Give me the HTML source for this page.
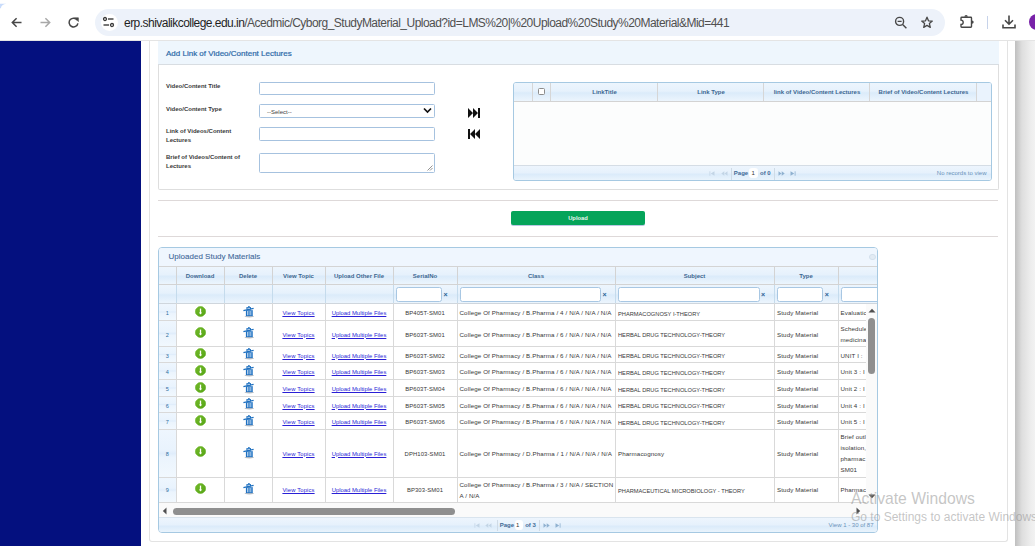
<!DOCTYPE html><html><head><meta charset="utf-8"><title>Study Material Upload</title><style>
*{box-sizing:border-box;margin:0;padding:0}
html,body{width:1035px;height:546px;overflow:hidden;background:#fff;font-family:"Liberation Sans",sans-serif;position:relative}
.a{position:absolute}
.t{position:absolute;white-space:nowrap}
</style></head><body>
<div class="a" style="left:0;top:0;width:1035px;height:41px;background:#fff"></div>
<svg class="a" style="left:11px;top:17px" width="11" height="11" viewBox="0 0 11 11"><path d="M10.5 5.5H1.5 M5.6 1.2L1.3 5.5L5.6 9.8" stroke="#474747" stroke-width="1.5" fill="none"/></svg>
<svg class="a" style="left:39.5px;top:17px" width="11" height="11" viewBox="0 0 11 11"><path d="M0.5 5.5H9.5 M5.4 1.2L9.7 5.5L5.4 9.8" stroke="#a8a8a8" stroke-width="1.5" fill="none"/></svg>
<svg class="a" style="left:68px;top:17px" width="11" height="11" viewBox="0 0 11 11"><path d="M9.3 3.2A4.4 4.4 0 1 0 9.9 6.3" stroke="#474747" stroke-width="1.5" fill="none"/><path d="M6.6 0.8H10.4V4.6Z" fill="#474747" stroke="#474747" stroke-width="0.6" stroke-linejoin="round"/></svg>
<div class="a" style="left:95px;top:9px;width:850px;height:27px;border-radius:14px;background:#edf2fa"></div>
<div class="a" style="left:100.5px;top:13.5px;width:17.5px;height:17.5px;border-radius:50%;background:#fff"></div>
<svg class="a" style="left:102px;top:16px" width="13" height="12" viewBox="0 0 13 12"><circle cx="3" cy="3" r="1.5" stroke="#3c3c3c" stroke-width="1.3" fill="none"/><path d="M6 3H11.5" stroke="#3c3c3c" stroke-width="1.4"/><circle cx="10" cy="9" r="1.5" stroke="#3c3c3c" stroke-width="1.3" fill="none"/><path d="M1.5 9H7" stroke="#3c3c3c" stroke-width="1.4"/></svg>
<div class="t" style="left:124px;top:14.5px;font-size:12px;line-height:16px;letter-spacing:-0.53px;color:#1f1f1f">erp.shivalikcollege.edu.in<span style="color:#505050">/Acedmic/Cyborg_StudyMaterial_Upload?id=LMS%20|%20Upload%20Study%20Material&amp;Mid=441</span></div>
<svg class="a" style="left:894px;top:16px" width="14" height="13" viewBox="0 0 14 13"><circle cx="5.6" cy="5.4" r="4" stroke="#474747" stroke-width="1.4" fill="none"/><path d="M3.6 5.4H7.6 M8.6 8.4L12.4 12.2" stroke="#474747" stroke-width="1.4"/></svg>
<svg class="a" style="left:919.5px;top:16px" width="14" height="13" viewBox="0 0 14 13"><path d="M7 1.2L8.5 4.8L12.3 5.1L9.4 7.6L10.3 11.4L7 9.4L3.7 11.4L4.6 7.6L1.7 5.1L5.5 4.8Z" stroke="#474747" stroke-width="1.3" fill="none" stroke-linejoin="round"/></svg>
<svg class="a" style="left:958px;top:13px" width="16" height="16" viewBox="0 0 16 16"><path d="M3.7 4.2H12.8Q13.5 4.2 13.5 4.9V13.6Q13.5 14.3 12.8 14.3H3.7Q3 14.3 3 13.6V11.5A2.2 2.2 0 0 0 3 7.1V4.9Q3 4.2 3.7 4.2Z" stroke="#474747" stroke-width="1.4" fill="none"/><path d="M6.4 3.8A1.7 1.7 0 0 1 9.8 3.8Z M14 7.4A1.7 1.7 0 0 1 14 10.8Z" fill="#474747"/></svg>
<div class="a" style="left:987px;top:16px;width:1px;height:13px;background:#c7d3ea"></div>
<svg class="a" style="left:1001px;top:14px" width="16" height="16" viewBox="0 0 16 16"><path d="M8 1.5V10 M4 6.2L8 10.2L12 6.2 M2 10.5V13.8H14V10.5" stroke="#474747" stroke-width="1.6" fill="none"/></svg>
<div class="a" style="left:1029.4px;top:13.8px;width:16.6px;height:16.6px;border-radius:50%;background:#7821a8"></div>
<svg class="a" style="left:0;top:0" width="8" height="9" viewBox="0 0 8 9"><path d="M0 3.7H6.5Q1.2 4.3 0.9 8.2H0Z" fill="#c9dcfb"/></svg>
<div class="a" style="left:0;top:40px;width:1035px;height:1px;background:#e4e4e4"></div>
<div class="a" style="left:0;top:41px;width:141px;height:505px;background:#04107f"></div>
<div class="a" style="left:1015px;top:41px;width:20px;height:505px;background:linear-gradient(to right,#bfbfbf,#dedede 35%,#eeeeee 80%,#f2f2f2)"></div>
<div class="a" style="left:149px;top:41px;width:859px;height:501px;border:1px solid #e3e3e3;border-top:none;border-radius:0 0 3px 3px"></div>
<div class="a" style="left:158px;top:41px;width:841px;height:149px;border:1px solid #dedede;border-top:none;border-radius:0 0 2px 2px"></div>
<div class="a" style="left:158px;top:41px;width:841px;height:24px;background:#eef6fd;border-bottom:1px solid #d8dde2"></div>
<div class="t" style="left:166px;top:48.7px;font-size:8px;line-height:10px;color:#2c69a8;-webkit-text-stroke:0.2px #2c69a8">Add Link of Video/Content Lectures</div>
<div class="t" style="left:166px;top:82px;font-size:6px;line-height:9px;font-weight:bold;color:#3a3a3a">Video/Content Title</div>
<div class="t" style="left:166px;top:104.6px;font-size:6px;line-height:9px;font-weight:bold;color:#3a3a3a">Video/Content Type</div>
<div class="t" style="left:166px;top:126.5px;font-size:6px;line-height:9px;font-weight:bold;color:#3a3a3a">Link of Videos/Content<br>Lectures</div>
<div class="t" style="left:166px;top:153px;font-size:6px;line-height:9px;font-weight:bold;color:#3a3a3a">Brief of Videos/Content of<br>Lectures</div>
<div class="a" style="left:258.5px;top:82px;width:176.5px;height:13px;border:1px solid #a6c2df;border-radius:1.5px;background:#fff"></div>
<div class="a" style="left:258.5px;top:104px;width:176.5px;height:13.5px;border:1px solid #a6c2df;border-radius:1.5px;background:#fff"></div>
<div class="t" style="left:267px;top:107.5px;font-size:6px;line-height:8px;color:#444">--Select--</div>
<svg class="a" style="left:423px;top:107px" width="9" height="7" viewBox="0 0 9 7"><path d="M1 1.5L4.5 5L8 1.5" stroke="#111" stroke-width="1.7" fill="none"/></svg>
<div class="a" style="left:258.5px;top:126.5px;width:176.5px;height:14px;border:1px solid #a6c2df;border-radius:1.5px;background:#fff"></div>
<div class="a" style="left:258.5px;top:152.5px;width:176.5px;height:20px;border:1px solid #a6c2df;border-radius:1.5px;background:#fff"></div>
<svg class="a" style="left:427px;top:165px" width="6" height="6" viewBox="0 0 6 6"><path d="M5.5 0.5L0.5 5.5 M5.5 3L3 5.5" stroke="#777" stroke-width="0.8"/></svg>
<svg class="a" style="left:468px;top:108px" width="12" height="10" viewBox="0 0 12 10"><path d="M0 0L5 5L0 10Z M5 0L10 5L5 10Z" fill="#111"/><rect x="10" y="0" width="2" height="10" fill="#111"/></svg>
<svg class="a" style="left:468px;top:129px" width="12" height="10" viewBox="0 0 12 10"><rect x="0" y="0" width="2" height="10" fill="#111"/><path d="M12 0L7 5L12 10Z M7 0L2 5L7 10Z" fill="#111"/></svg>
<div class="a" style="left:513px;top:82px;width:479px;height:99px;border:1px solid #a6c9e2;border-radius:3px;background:#fcfdfd;overflow:hidden">
<div class="a" style="left:0;top:0;width:477px;height:19px;background:linear-gradient(#edf5fd,#e6f1fc 45%,#dbebfa 55%,#ecf5fd);border-bottom:1px solid #d3d3d3"></div>
<div class="a" style="left:462px;top:0;width:20px;height:18px;background:#eaf3fd"></div>
<div class="a" style="left:18px;top:0;width:1px;height:18px;background:#d6d6d6"></div>
<div class="a" style="left:36px;top:0;width:1px;height:18px;background:#d6d6d6"></div>
<div class="a" style="left:143px;top:0;width:1px;height:18px;background:#d6d6d6"></div>
<div class="a" style="left:249px;top:0;width:1px;height:18px;background:#d6d6d6"></div>
<div class="a" style="left:355px;top:0;width:1px;height:18px;background:#d6d6d6"></div>
<div class="a" style="left:462px;top:0;width:1px;height:18px;background:#d6d6d6"></div>
<div class="a" style="left:24px;top:5.3px;width:6.5px;height:6.5px;border:1px solid #8c8c8c;border-radius:1.5px;background:#fff"></div>
<div class="t" style="left:37px;top:5px;width:107px;font-size:6px;line-height:8px;font-weight:bold;color:#3d6791;text-align:center">LinkTitle</div>
<div class="t" style="left:144px;top:5px;width:106px;font-size:6px;line-height:8px;font-weight:bold;color:#3d6791;text-align:center">Link Type</div>
<div class="t" style="left:250px;top:5px;width:106px;font-size:6px;line-height:8px;font-weight:bold;color:#3d6791;text-align:center">link of Video/Content Lectures</div>
<div class="t" style="left:356px;top:5px;width:107px;font-size:6px;line-height:8px;font-weight:bold;color:#3d6791;text-align:center">Brief of Video/Content Lectures</div>
<div class="a" style="left:0;top:82px;width:477px;height:16px;background:linear-gradient(#edf5fd,#e6f1fc 45%,#dbebfa 55%,#ecf5fd);border-top:1px solid #d5dde5"></div>
<svg class="a" style="left:195px;top:87.5px" width="6" height="5" viewBox="0 0 6 5"><rect x="0.5" y="0.3" width="0.8" height="4.4" fill="#c3d5e6"/><path d="M5.5 0.3L1.8 2.5L5.5 4.7Z" fill="#c3d5e6"/></svg>
<svg class="a" style="left:206.5px;top:87.5px" width="7" height="5" viewBox="0 0 7 5"><path d="M3.3 0.3L0.3 2.5L3.3 4.7Z M6.5 0.3L3.5 2.5L6.5 4.7Z" fill="#c3d5e6"/></svg>
<svg class="a" style="left:263.5px;top:87.5px" width="7" height="5" viewBox="0 0 7 5"><path d="M0.5 0.3L3.5 2.5L0.5 4.7Z M3.7 0.3L6.7 2.5L3.7 4.7Z" fill="#8fb1d0"/></svg>
<svg class="a" style="left:276px;top:87.5px" width="6" height="5" viewBox="0 0 6 5"><path d="M0.5 0.3L4.2 2.5L0.5 4.7Z" fill="#8fb1d0"/><rect x="4.7" y="0.3" width="0.8" height="4.4" fill="#8fb1d0"/></svg>
<div class="a" style="left:217px;top:84.5px;width:1px;height:12px;background:#cfdbe6"></div>
<div class="t" style="left:219.79999999999995px;top:85.6px;font-size:6px;line-height:8px;color:#3f6a96;font-weight:bold">Page</div>
<div class="a" style="left:235.29999999999995px;top:85px;width:8.5px;height:9.5px;background:#fff;border-radius:3px"></div>
<div class="t" style="left:237.5px;top:85.6px;font-size:6px;line-height:8px;color:#3f6a96;color:#333">1</div>
<div class="t" style="left:246px;top:85.6px;font-size:6px;line-height:8px;color:#3f6a96;font-weight:bold">of 0</div>
<div class="a" style="left:259.5px;top:84.5px;width:1px;height:12px;background:#cfdbe6"></div>
<div class="t" style="left:422.79999999999995px;top:85.6px;font-size:6px;line-height:8px;color:#3f6a96;color:#6b93ba">No records to view</div>
</div>
<div class="a" style="left:158px;top:200px;width:840px;height:1px;background:#ded9d9"></div>
<div class="a" style="left:158px;top:236px;width:840px;height:1px;background:#ded9d9"></div>
<div class="a" style="left:511px;top:211px;width:134px;height:14px;background:#05a45a;border-radius:2px;box-shadow:0 1px 0 #b9c7e3"></div>
<div class="t" style="left:511px;top:214px;width:134px;text-align:center;font-size:5.8px;line-height:8px;font-weight:bold;color:#e8f5ee">Upload</div>
<div class="a" style="left:158px;top:247px;width:720px;height:286px;border:1px solid #a6c9e2;border-radius:4px;background:#fff;overflow:hidden">
<div class="a" style="left:0;top:0;width:718px;height:19px;background:#eff6fe;border-bottom:1px solid #d4d4d4"></div>
<div class="t" style="left:9.60px;top:4.00px;font-size:8px;line-height:10px;color:#42699a;-webkit-text-stroke:0.1px #42699a">Uploaded Study Materials</div>
<div class="a" style="left:710.30px;top:5.50px;width:6.5px;height:6.5px;border-radius:50%;border:1px solid #d3e0ec;background:#e2ebf4"></div>
<div class="a" style="left:0;top:19.00px;width:718px;height:18px;background:linear-gradient(#edf5fd,#e6f1fc 45%,#dbebfa 55%,#ecf5fd);border-bottom:1px solid #d3d3d3"></div>
<div class="a" style="left:0;top:37.00px;width:718px;height:19px;background:linear-gradient(#edf5fd,#e6f1fc 45%,#dbebfa 55%,#ecf5fd);border-bottom:1px solid #cfd6dd"></div>
<div class="a" style="left:17.00px;top:19.00px;width:1px;height:18px;background:#d3d3d3"></div>
<div class="a" style="left:17.00px;top:37.00px;width:1px;height:18px;background:#c5dbec"></div>
<div class="a" style="left:65.00px;top:19.00px;width:1px;height:18px;background:#d3d3d3"></div>
<div class="a" style="left:65.00px;top:37.00px;width:1px;height:18px;background:#c5dbec"></div>
<div class="a" style="left:113.00px;top:19.00px;width:1px;height:18px;background:#d3d3d3"></div>
<div class="a" style="left:113.00px;top:37.00px;width:1px;height:18px;background:#c5dbec"></div>
<div class="a" style="left:166.00px;top:19.00px;width:1px;height:18px;background:#d3d3d3"></div>
<div class="a" style="left:166.00px;top:37.00px;width:1px;height:18px;background:#c5dbec"></div>
<div class="a" style="left:234.00px;top:19.00px;width:1px;height:18px;background:#d3d3d3"></div>
<div class="a" style="left:234.00px;top:37.00px;width:1px;height:18px;background:#c5dbec"></div>
<div class="a" style="left:298.00px;top:19.00px;width:1px;height:18px;background:#d3d3d3"></div>
<div class="a" style="left:298.00px;top:37.00px;width:1px;height:18px;background:#c5dbec"></div>
<div class="a" style="left:456.00px;top:19.00px;width:1px;height:18px;background:#d3d3d3"></div>
<div class="a" style="left:456.00px;top:37.00px;width:1px;height:18px;background:#c5dbec"></div>
<div class="a" style="left:615.00px;top:19.00px;width:1px;height:18px;background:#d3d3d3"></div>
<div class="a" style="left:615.00px;top:37.00px;width:1px;height:18px;background:#c5dbec"></div>
<div class="a" style="left:679.00px;top:19.00px;width:1px;height:18px;background:#d3d3d3"></div>
<div class="a" style="left:679.00px;top:37.00px;width:1px;height:18px;background:#c5dbec"></div>
<div class="t" style="left:17.00px;top:24.00px;width:48px;font-size:6px;line-height:8px;font-weight:bold;color:#3d6791;text-align:center">Download</div>
<div class="t" style="left:65.00px;top:24.00px;width:48px;font-size:6px;line-height:8px;font-weight:bold;color:#3d6791;text-align:center">Delete</div>
<div class="t" style="left:113.00px;top:24.00px;width:53px;font-size:6px;line-height:8px;font-weight:bold;color:#3d6791;text-align:center">View Topic</div>
<div class="t" style="left:166.00px;top:24.00px;width:68px;font-size:6px;line-height:8px;font-weight:bold;color:#3d6791;text-align:center">Upload Other File</div>
<div class="t" style="left:234.00px;top:24.00px;width:64px;font-size:6px;line-height:8px;font-weight:bold;color:#3d6791;text-align:center">SerialNo</div>
<div class="t" style="left:298.00px;top:24.00px;width:158px;font-size:6px;line-height:8px;font-weight:bold;color:#3d6791;text-align:center">Class</div>
<div class="t" style="left:456.00px;top:24.00px;width:159px;font-size:6px;line-height:8px;font-weight:bold;color:#3d6791;text-align:center">Subject</div>
<div class="t" style="left:615.00px;top:24.00px;width:64px;font-size:6px;line-height:8px;font-weight:bold;color:#3d6791;text-align:center">Type</div>
<div class="a" style="left:237.20px;top:39.30px;width:45.5px;height:14.4px;border:1px solid #a8c7e3;border-radius:2.5px;background:#fff"></div>
<div class="t" style="left:284.50px;top:42.60px;font-size:7px;line-height:8px;font-weight:bold;color:#2a5f94">&#215;</div>
<div class="a" style="left:300.70px;top:39.30px;width:140.9px;height:14.4px;border:1px solid #a8c7e3;border-radius:2.5px;background:#fff"></div>
<div class="t" style="left:443.60px;top:42.60px;font-size:7px;line-height:8px;font-weight:bold;color:#2a5f94">&#215;</div>
<div class="a" style="left:459.00px;top:39.30px;width:141.7px;height:14.4px;border:1px solid #a8c7e3;border-radius:2.5px;background:#fff"></div>
<div class="t" style="left:602.00px;top:42.60px;font-size:7px;line-height:8px;font-weight:bold;color:#2a5f94">&#215;</div>
<div class="a" style="left:618.00px;top:39.30px;width:45.7px;height:14.4px;border:1px solid #a8c7e3;border-radius:2.5px;background:#fff"></div>
<div class="t" style="left:665.70px;top:42.60px;font-size:7px;line-height:8px;font-weight:bold;color:#2a5f94">&#215;</div>
<div class="a" style="left:682.00px;top:39.30px;width:99.0px;height:14.4px;border:1px solid #a8c7e3;border-radius:2.5px;background:#fff"></div>
<div class="t" style="left:783.00px;top:42.60px;font-size:7px;line-height:8px;font-weight:bold;color:#2a5f94">&#215;</div>
<div class="a" style="left:0;top:56.00px;width:17px;height:16px;background:linear-gradient(#eef6fe,#e9f3fd 42%,#e0edfb 50%,#ebf4fd 58%,#f1f8fe)"></div>
<div class="a" style="left:0;top:73.00px;width:17px;height:25px;background:linear-gradient(#eef6fe,#e9f3fd 42%,#e0edfb 50%,#ebf4fd 58%,#f1f8fe)"></div>
<div class="a" style="left:0;top:99.00px;width:17px;height:15px;background:linear-gradient(#eef6fe,#e9f3fd 42%,#e0edfb 50%,#ebf4fd 58%,#f1f8fe)"></div>
<div class="a" style="left:0;top:115.00px;width:17px;height:16px;background:linear-gradient(#eef6fe,#e9f3fd 42%,#e0edfb 50%,#ebf4fd 58%,#f1f8fe)"></div>
<div class="a" style="left:0;top:132.00px;width:17px;height:16px;background:linear-gradient(#eef6fe,#e9f3fd 42%,#e0edfb 50%,#ebf4fd 58%,#f1f8fe)"></div>
<div class="a" style="left:0;top:149.00px;width:17px;height:15px;background:linear-gradient(#eef6fe,#e9f3fd 42%,#e0edfb 50%,#ebf4fd 58%,#f1f8fe)"></div>
<div class="a" style="left:0;top:165.00px;width:17px;height:16px;background:linear-gradient(#eef6fe,#e9f3fd 42%,#e0edfb 50%,#ebf4fd 58%,#f1f8fe)"></div>
<div class="a" style="left:0;top:182.00px;width:17px;height:47px;background:linear-gradient(#eef6fe,#e9f3fd 42%,#e0edfb 50%,#ebf4fd 58%,#f1f8fe)"></div>
<div class="a" style="left:0;top:230.00px;width:17px;height:24px;background:linear-gradient(#eef6fe,#e9f3fd 42%,#e0edfb 50%,#ebf4fd 58%,#f1f8fe)"></div>
<div class="a" style="left:0;top:72.00px;width:718px;height:1px;background:#d9d9d9"></div>
<div class="a" style="left:0;top:98.00px;width:718px;height:1px;background:#d9d9d9"></div>
<div class="a" style="left:0;top:114.00px;width:718px;height:1px;background:#d9d9d9"></div>
<div class="a" style="left:0;top:131.00px;width:718px;height:1px;background:#d9d9d9"></div>
<div class="a" style="left:0;top:148.00px;width:718px;height:1px;background:#d9d9d9"></div>
<div class="a" style="left:0;top:164.00px;width:718px;height:1px;background:#d9d9d9"></div>
<div class="a" style="left:0;top:181.00px;width:718px;height:1px;background:#d9d9d9"></div>
<div class="a" style="left:0;top:229.00px;width:718px;height:1px;background:#d9d9d9"></div>
<div class="a" style="left:0;top:254.00px;width:718px;height:1px;background:#d9d9d9"></div>
<div class="a" style="left:17.00px;top:55.00px;width:1px;height:200px;background:#d9d9d9"></div>
<div class="a" style="left:65.00px;top:55.00px;width:1px;height:200px;background:#d9d9d9"></div>
<div class="a" style="left:113.00px;top:55.00px;width:1px;height:200px;background:#d9d9d9"></div>
<div class="a" style="left:166.00px;top:55.00px;width:1px;height:200px;background:#d9d9d9"></div>
<div class="a" style="left:234.00px;top:55.00px;width:1px;height:200px;background:#d9d9d9"></div>
<div class="a" style="left:298.00px;top:55.00px;width:1px;height:200px;background:#d9d9d9"></div>
<div class="a" style="left:456.00px;top:55.00px;width:1px;height:200px;background:#d9d9d9"></div>
<div class="a" style="left:615.00px;top:55.00px;width:1px;height:200px;background:#d9d9d9"></div>
<div class="a" style="left:679.00px;top:55.00px;width:1px;height:200px;background:#d9d9d9"></div>
<div class="t" style="left:-1.00px;top:60.00px;width:18.6px;text-align:center;font-size:5.5px;line-height:11px;color:#2e6e9e">1</div>
<div class="a" style="left:36.20px;top:58.00px;width:11px;height:11px;line-height:0"><svg width="11" height="11" viewBox="0 0 11 11"><defs><linearGradient id="dg0" x1="0" y1="0" x2="1" y2="1"><stop offset="0" stop-color="#72b92a"/><stop offset="1" stop-color="#56a516"/></linearGradient></defs><path d="M3.6 0.4H7.4L10.6 3.6V7.4L7.4 10.6H3.6L0.4 7.4V3.6Z" fill="url(#dg0)"/><circle cx="5.5" cy="5.5" r="5" fill="url(#dg0)"/><path d="M5.5 2.6V7.6" stroke="#fff" stroke-width="1.3"/><path d="M3.9 6.5L5.5 8.6L7.1 6.5Z" fill="#fff"/></svg></div>
<div class="a" style="left:84.00px;top:57.90px;width:12px;height:12px;line-height:0"><svg width="12" height="12" viewBox="0 0 12 12"><ellipse cx="6.3" cy="10.6" rx="4.8" ry="0.8" fill="#8c959e" opacity="0.6"/><path d="M0.4 4.6L10.6 2.4" stroke="#1f70c0" stroke-width="1.4"/><rect x="3.4" y="1.1" width="4.6" height="2.4" fill="#1f70c0"/><rect x="4.4" y="1.9" width="2.6" height="0.8" fill="#dbe9f6"/><rect x="5" y="0.2" width="1.8" height="1.1" fill="#1f70c0"/><rect x="2.9" y="4.2" width="6.9" height="5.9" fill="#1f70c0"/><rect x="4.3" y="5" width="1" height="4.3" fill="#e6f0fa"/><rect x="6.6" y="5" width="1" height="4.3" fill="#cfe1f3"/><rect x="8.5" y="4.4" width="0.8" height="5" fill="#7fb0e0"/></svg></div>
<div class="t" style="left:113.00px;top:60.10px;width:53.0px;text-align:center;font-size:6.2px;line-height:11px;color:#383838;letter-spacing:0.12px;color:#2a1fd6;font-size:5.9px"><u>View Topics</u></div>
<div class="t" style="left:166.00px;top:60.10px;width:68.0px;text-align:center;font-size:6.2px;line-height:11px;color:#383838;letter-spacing:0.12px;color:#2a1fd6;font-size:5.9px;letter-spacing:0"><u>Upload Multiple Files</u></div>
<div class="t" style="left:234.00px;top:60.30px;width:64.0px;text-align:center;font-size:6.2px;line-height:11px;color:#383838;letter-spacing:0.12px;font-size:5.9px">BP405T-SM01</div>
<div class="t" style="left:300.50px;top:59.30px;font-size:6.2px;line-height:11px;color:#383838;letter-spacing:0.12px;">College Of Pharmacy / B.Pharma / 4 / N/A / N/A / N/A</div>
<div class="t" style="left:459.00px;top:60.90px;font-size:6.2px;line-height:11px;color:#383838;letter-spacing:0.12px;font-size:5.7px;letter-spacing:0">PHARMACOGNOSY I-THEORY</div>
<div class="t" style="left:618.00px;top:59.30px;font-size:6.2px;line-height:11px;color:#383838;letter-spacing:0.12px;">Study Material</div>
<div class="t" style="left:681.50px;top:59.30px;font-size:6.2px;line-height:11px;color:#383838;letter-spacing:0.12px;">Evaluatic</div>
<div class="t" style="left:-1.00px;top:81.50px;width:18.6px;text-align:center;font-size:5.5px;line-height:11px;color:#2e6e9e">2</div>
<div class="a" style="left:36.20px;top:79.00px;width:11px;height:11px;line-height:0"><svg width="11" height="11" viewBox="0 0 11 11"><defs><linearGradient id="dg1" x1="0" y1="0" x2="1" y2="1"><stop offset="0" stop-color="#72b92a"/><stop offset="1" stop-color="#56a516"/></linearGradient></defs><path d="M3.6 0.4H7.4L10.6 3.6V7.4L7.4 10.6H3.6L0.4 7.4V3.6Z" fill="url(#dg1)"/><circle cx="5.5" cy="5.5" r="5" fill="url(#dg1)"/><path d="M5.5 2.6V7.6" stroke="#fff" stroke-width="1.3"/><path d="M3.9 6.5L5.5 8.6L7.1 6.5Z" fill="#fff"/></svg></div>
<div class="a" style="left:84.00px;top:79.40px;width:12px;height:12px;line-height:0"><svg width="12" height="12" viewBox="0 0 12 12"><ellipse cx="6.3" cy="10.6" rx="4.8" ry="0.8" fill="#8c959e" opacity="0.6"/><path d="M0.4 4.6L10.6 2.4" stroke="#1f70c0" stroke-width="1.4"/><rect x="3.4" y="1.1" width="4.6" height="2.4" fill="#1f70c0"/><rect x="4.4" y="1.9" width="2.6" height="0.8" fill="#dbe9f6"/><rect x="5" y="0.2" width="1.8" height="1.1" fill="#1f70c0"/><rect x="2.9" y="4.2" width="6.9" height="5.9" fill="#1f70c0"/><rect x="4.3" y="5" width="1" height="4.3" fill="#e6f0fa"/><rect x="6.6" y="5" width="1" height="4.3" fill="#cfe1f3"/><rect x="8.5" y="4.4" width="0.8" height="5" fill="#7fb0e0"/></svg></div>
<div class="t" style="left:113.00px;top:81.60px;width:53.0px;text-align:center;font-size:6.2px;line-height:11px;color:#383838;letter-spacing:0.12px;color:#2a1fd6;font-size:5.9px"><u>View Topics</u></div>
<div class="t" style="left:166.00px;top:81.60px;width:68.0px;text-align:center;font-size:6.2px;line-height:11px;color:#383838;letter-spacing:0.12px;color:#2a1fd6;font-size:5.9px;letter-spacing:0"><u>Upload Multiple Files</u></div>
<div class="t" style="left:234.00px;top:81.80px;width:64.0px;text-align:center;font-size:6.2px;line-height:11px;color:#383838;letter-spacing:0.12px;font-size:5.9px">BP603T-SM01</div>
<div class="t" style="left:300.50px;top:80.80px;font-size:6.2px;line-height:11px;color:#383838;letter-spacing:0.12px;">College Of Pharmacy / B.Pharma / 6 / N/A / N/A / N/A</div>
<div class="t" style="left:459.00px;top:82.40px;font-size:6.2px;line-height:11px;color:#383838;letter-spacing:0.12px;font-size:5.7px;letter-spacing:0">HERBAL DRUG TECHNOLOGY-THEORY</div>
<div class="t" style="left:618.00px;top:80.80px;font-size:6.2px;line-height:11px;color:#383838;letter-spacing:0.12px;">Study Material</div>
<div class="t" style="left:681.50px;top:75.30px;font-size:6.2px;line-height:11px;color:#383838;letter-spacing:0.12px;">Schedule<br>medicina</div>
<div class="t" style="left:-1.00px;top:102.50px;width:18.6px;text-align:center;font-size:5.5px;line-height:11px;color:#2e6e9e">3</div>
<div class="a" style="left:36.20px;top:100.00px;width:11px;height:11px;line-height:0"><svg width="11" height="11" viewBox="0 0 11 11"><defs><linearGradient id="dg2" x1="0" y1="0" x2="1" y2="1"><stop offset="0" stop-color="#72b92a"/><stop offset="1" stop-color="#56a516"/></linearGradient></defs><path d="M3.6 0.4H7.4L10.6 3.6V7.4L7.4 10.6H3.6L0.4 7.4V3.6Z" fill="url(#dg2)"/><circle cx="5.5" cy="5.5" r="5" fill="url(#dg2)"/><path d="M5.5 2.6V7.6" stroke="#fff" stroke-width="1.3"/><path d="M3.9 6.5L5.5 8.6L7.1 6.5Z" fill="#fff"/></svg></div>
<div class="a" style="left:84.00px;top:100.40px;width:12px;height:12px;line-height:0"><svg width="12" height="12" viewBox="0 0 12 12"><ellipse cx="6.3" cy="10.6" rx="4.8" ry="0.8" fill="#8c959e" opacity="0.6"/><path d="M0.4 4.6L10.6 2.4" stroke="#1f70c0" stroke-width="1.4"/><rect x="3.4" y="1.1" width="4.6" height="2.4" fill="#1f70c0"/><rect x="4.4" y="1.9" width="2.6" height="0.8" fill="#dbe9f6"/><rect x="5" y="0.2" width="1.8" height="1.1" fill="#1f70c0"/><rect x="2.9" y="4.2" width="6.9" height="5.9" fill="#1f70c0"/><rect x="4.3" y="5" width="1" height="4.3" fill="#e6f0fa"/><rect x="6.6" y="5" width="1" height="4.3" fill="#cfe1f3"/><rect x="8.5" y="4.4" width="0.8" height="5" fill="#7fb0e0"/></svg></div>
<div class="t" style="left:113.00px;top:102.60px;width:53.0px;text-align:center;font-size:6.2px;line-height:11px;color:#383838;letter-spacing:0.12px;color:#2a1fd6;font-size:5.9px"><u>View Topics</u></div>
<div class="t" style="left:166.00px;top:102.60px;width:68.0px;text-align:center;font-size:6.2px;line-height:11px;color:#383838;letter-spacing:0.12px;color:#2a1fd6;font-size:5.9px;letter-spacing:0"><u>Upload Multiple Files</u></div>
<div class="t" style="left:234.00px;top:102.80px;width:64.0px;text-align:center;font-size:6.2px;line-height:11px;color:#383838;letter-spacing:0.12px;font-size:5.9px">BP603T-SM02</div>
<div class="t" style="left:300.50px;top:101.80px;font-size:6.2px;line-height:11px;color:#383838;letter-spacing:0.12px;">College Of Pharmacy / B.Pharma / 6 / N/A / N/A / N/A</div>
<div class="t" style="left:459.00px;top:103.40px;font-size:6.2px;line-height:11px;color:#383838;letter-spacing:0.12px;font-size:5.7px;letter-spacing:0">HERBAL DRUG TECHNOLOGY-THEORY</div>
<div class="t" style="left:618.00px;top:101.80px;font-size:6.2px;line-height:11px;color:#383838;letter-spacing:0.12px;">Study Material</div>
<div class="t" style="left:681.50px;top:101.80px;font-size:6.2px;line-height:11px;color:#383838;letter-spacing:0.12px;">UNIT I :</div>
<div class="t" style="left:-1.00px;top:119.00px;width:18.6px;text-align:center;font-size:5.5px;line-height:11px;color:#2e6e9e">4</div>
<div class="a" style="left:36.20px;top:117.00px;width:11px;height:11px;line-height:0"><svg width="11" height="11" viewBox="0 0 11 11"><defs><linearGradient id="dg3" x1="0" y1="0" x2="1" y2="1"><stop offset="0" stop-color="#72b92a"/><stop offset="1" stop-color="#56a516"/></linearGradient></defs><path d="M3.6 0.4H7.4L10.6 3.6V7.4L7.4 10.6H3.6L0.4 7.4V3.6Z" fill="url(#dg3)"/><circle cx="5.5" cy="5.5" r="5" fill="url(#dg3)"/><path d="M5.5 2.6V7.6" stroke="#fff" stroke-width="1.3"/><path d="M3.9 6.5L5.5 8.6L7.1 6.5Z" fill="#fff"/></svg></div>
<div class="a" style="left:84.00px;top:116.90px;width:12px;height:12px;line-height:0"><svg width="12" height="12" viewBox="0 0 12 12"><ellipse cx="6.3" cy="10.6" rx="4.8" ry="0.8" fill="#8c959e" opacity="0.6"/><path d="M0.4 4.6L10.6 2.4" stroke="#1f70c0" stroke-width="1.4"/><rect x="3.4" y="1.1" width="4.6" height="2.4" fill="#1f70c0"/><rect x="4.4" y="1.9" width="2.6" height="0.8" fill="#dbe9f6"/><rect x="5" y="0.2" width="1.8" height="1.1" fill="#1f70c0"/><rect x="2.9" y="4.2" width="6.9" height="5.9" fill="#1f70c0"/><rect x="4.3" y="5" width="1" height="4.3" fill="#e6f0fa"/><rect x="6.6" y="5" width="1" height="4.3" fill="#cfe1f3"/><rect x="8.5" y="4.4" width="0.8" height="5" fill="#7fb0e0"/></svg></div>
<div class="t" style="left:113.00px;top:119.10px;width:53.0px;text-align:center;font-size:6.2px;line-height:11px;color:#383838;letter-spacing:0.12px;color:#2a1fd6;font-size:5.9px"><u>View Topics</u></div>
<div class="t" style="left:166.00px;top:119.10px;width:68.0px;text-align:center;font-size:6.2px;line-height:11px;color:#383838;letter-spacing:0.12px;color:#2a1fd6;font-size:5.9px;letter-spacing:0"><u>Upload Multiple Files</u></div>
<div class="t" style="left:234.00px;top:119.30px;width:64.0px;text-align:center;font-size:6.2px;line-height:11px;color:#383838;letter-spacing:0.12px;font-size:5.9px">BP603T-SM03</div>
<div class="t" style="left:300.50px;top:118.30px;font-size:6.2px;line-height:11px;color:#383838;letter-spacing:0.12px;">College Of Pharmacy / B.Pharma / 6 / N/A / N/A / N/A</div>
<div class="t" style="left:459.00px;top:119.90px;font-size:6.2px;line-height:11px;color:#383838;letter-spacing:0.12px;font-size:5.7px;letter-spacing:0">HERBAL DRUG TECHNOLOGY-THEORY</div>
<div class="t" style="left:618.00px;top:118.30px;font-size:6.2px;line-height:11px;color:#383838;letter-spacing:0.12px;">Study Material</div>
<div class="t" style="left:681.50px;top:118.30px;font-size:6.2px;line-height:11px;color:#383838;letter-spacing:0.12px;">Unit 3 : I</div>
<div class="t" style="left:-1.00px;top:136.00px;width:18.6px;text-align:center;font-size:5.5px;line-height:11px;color:#2e6e9e">5</div>
<div class="a" style="left:36.20px;top:134.00px;width:11px;height:11px;line-height:0"><svg width="11" height="11" viewBox="0 0 11 11"><defs><linearGradient id="dg4" x1="0" y1="0" x2="1" y2="1"><stop offset="0" stop-color="#72b92a"/><stop offset="1" stop-color="#56a516"/></linearGradient></defs><path d="M3.6 0.4H7.4L10.6 3.6V7.4L7.4 10.6H3.6L0.4 7.4V3.6Z" fill="url(#dg4)"/><circle cx="5.5" cy="5.5" r="5" fill="url(#dg4)"/><path d="M5.5 2.6V7.6" stroke="#fff" stroke-width="1.3"/><path d="M3.9 6.5L5.5 8.6L7.1 6.5Z" fill="#fff"/></svg></div>
<div class="a" style="left:84.00px;top:133.90px;width:12px;height:12px;line-height:0"><svg width="12" height="12" viewBox="0 0 12 12"><ellipse cx="6.3" cy="10.6" rx="4.8" ry="0.8" fill="#8c959e" opacity="0.6"/><path d="M0.4 4.6L10.6 2.4" stroke="#1f70c0" stroke-width="1.4"/><rect x="3.4" y="1.1" width="4.6" height="2.4" fill="#1f70c0"/><rect x="4.4" y="1.9" width="2.6" height="0.8" fill="#dbe9f6"/><rect x="5" y="0.2" width="1.8" height="1.1" fill="#1f70c0"/><rect x="2.9" y="4.2" width="6.9" height="5.9" fill="#1f70c0"/><rect x="4.3" y="5" width="1" height="4.3" fill="#e6f0fa"/><rect x="6.6" y="5" width="1" height="4.3" fill="#cfe1f3"/><rect x="8.5" y="4.4" width="0.8" height="5" fill="#7fb0e0"/></svg></div>
<div class="t" style="left:113.00px;top:136.10px;width:53.0px;text-align:center;font-size:6.2px;line-height:11px;color:#383838;letter-spacing:0.12px;color:#2a1fd6;font-size:5.9px"><u>View Topics</u></div>
<div class="t" style="left:166.00px;top:136.10px;width:68.0px;text-align:center;font-size:6.2px;line-height:11px;color:#383838;letter-spacing:0.12px;color:#2a1fd6;font-size:5.9px;letter-spacing:0"><u>Upload Multiple Files</u></div>
<div class="t" style="left:234.00px;top:136.30px;width:64.0px;text-align:center;font-size:6.2px;line-height:11px;color:#383838;letter-spacing:0.12px;font-size:5.9px">BP603T-SM04</div>
<div class="t" style="left:300.50px;top:135.30px;font-size:6.2px;line-height:11px;color:#383838;letter-spacing:0.12px;">College Of Pharmacy / B.Pharma / 6 / N/A / N/A / N/A</div>
<div class="t" style="left:459.00px;top:136.90px;font-size:6.2px;line-height:11px;color:#383838;letter-spacing:0.12px;font-size:5.7px;letter-spacing:0">HERBAL DRUG TECHNOLOGY-THEORY</div>
<div class="t" style="left:618.00px;top:135.30px;font-size:6.2px;line-height:11px;color:#383838;letter-spacing:0.12px;">Study Material</div>
<div class="t" style="left:681.50px;top:135.30px;font-size:6.2px;line-height:11px;color:#383838;letter-spacing:0.12px;">Unit 2 : I</div>
<div class="t" style="left:-1.00px;top:152.50px;width:18.6px;text-align:center;font-size:5.5px;line-height:11px;color:#2e6e9e">6</div>
<div class="a" style="left:36.20px;top:150.00px;width:11px;height:11px;line-height:0"><svg width="11" height="11" viewBox="0 0 11 11"><defs><linearGradient id="dg5" x1="0" y1="0" x2="1" y2="1"><stop offset="0" stop-color="#72b92a"/><stop offset="1" stop-color="#56a516"/></linearGradient></defs><path d="M3.6 0.4H7.4L10.6 3.6V7.4L7.4 10.6H3.6L0.4 7.4V3.6Z" fill="url(#dg5)"/><circle cx="5.5" cy="5.5" r="5" fill="url(#dg5)"/><path d="M5.5 2.6V7.6" stroke="#fff" stroke-width="1.3"/><path d="M3.9 6.5L5.5 8.6L7.1 6.5Z" fill="#fff"/></svg></div>
<div class="a" style="left:84.00px;top:150.40px;width:12px;height:12px;line-height:0"><svg width="12" height="12" viewBox="0 0 12 12"><ellipse cx="6.3" cy="10.6" rx="4.8" ry="0.8" fill="#8c959e" opacity="0.6"/><path d="M0.4 4.6L10.6 2.4" stroke="#1f70c0" stroke-width="1.4"/><rect x="3.4" y="1.1" width="4.6" height="2.4" fill="#1f70c0"/><rect x="4.4" y="1.9" width="2.6" height="0.8" fill="#dbe9f6"/><rect x="5" y="0.2" width="1.8" height="1.1" fill="#1f70c0"/><rect x="2.9" y="4.2" width="6.9" height="5.9" fill="#1f70c0"/><rect x="4.3" y="5" width="1" height="4.3" fill="#e6f0fa"/><rect x="6.6" y="5" width="1" height="4.3" fill="#cfe1f3"/><rect x="8.5" y="4.4" width="0.8" height="5" fill="#7fb0e0"/></svg></div>
<div class="t" style="left:113.00px;top:152.60px;width:53.0px;text-align:center;font-size:6.2px;line-height:11px;color:#383838;letter-spacing:0.12px;color:#2a1fd6;font-size:5.9px"><u>View Topics</u></div>
<div class="t" style="left:166.00px;top:152.60px;width:68.0px;text-align:center;font-size:6.2px;line-height:11px;color:#383838;letter-spacing:0.12px;color:#2a1fd6;font-size:5.9px;letter-spacing:0"><u>Upload Multiple Files</u></div>
<div class="t" style="left:234.00px;top:152.80px;width:64.0px;text-align:center;font-size:6.2px;line-height:11px;color:#383838;letter-spacing:0.12px;font-size:5.9px">BP603T-SM05</div>
<div class="t" style="left:300.50px;top:151.80px;font-size:6.2px;line-height:11px;color:#383838;letter-spacing:0.12px;">College Of Pharmacy / B.Pharma / 6 / N/A / N/A / N/A</div>
<div class="t" style="left:459.00px;top:153.40px;font-size:6.2px;line-height:11px;color:#383838;letter-spacing:0.12px;font-size:5.7px;letter-spacing:0">HERBAL DRUG TECHNOLOGY-THEORY</div>
<div class="t" style="left:618.00px;top:151.80px;font-size:6.2px;line-height:11px;color:#383838;letter-spacing:0.12px;">Study Material</div>
<div class="t" style="left:681.50px;top:151.80px;font-size:6.2px;line-height:11px;color:#383838;letter-spacing:0.12px;">Unit 4 : I</div>
<div class="t" style="left:-1.00px;top:169.00px;width:18.6px;text-align:center;font-size:5.5px;line-height:11px;color:#2e6e9e">7</div>
<div class="a" style="left:36.20px;top:167.00px;width:11px;height:11px;line-height:0"><svg width="11" height="11" viewBox="0 0 11 11"><defs><linearGradient id="dg6" x1="0" y1="0" x2="1" y2="1"><stop offset="0" stop-color="#72b92a"/><stop offset="1" stop-color="#56a516"/></linearGradient></defs><path d="M3.6 0.4H7.4L10.6 3.6V7.4L7.4 10.6H3.6L0.4 7.4V3.6Z" fill="url(#dg6)"/><circle cx="5.5" cy="5.5" r="5" fill="url(#dg6)"/><path d="M5.5 2.6V7.6" stroke="#fff" stroke-width="1.3"/><path d="M3.9 6.5L5.5 8.6L7.1 6.5Z" fill="#fff"/></svg></div>
<div class="a" style="left:84.00px;top:166.90px;width:12px;height:12px;line-height:0"><svg width="12" height="12" viewBox="0 0 12 12"><ellipse cx="6.3" cy="10.6" rx="4.8" ry="0.8" fill="#8c959e" opacity="0.6"/><path d="M0.4 4.6L10.6 2.4" stroke="#1f70c0" stroke-width="1.4"/><rect x="3.4" y="1.1" width="4.6" height="2.4" fill="#1f70c0"/><rect x="4.4" y="1.9" width="2.6" height="0.8" fill="#dbe9f6"/><rect x="5" y="0.2" width="1.8" height="1.1" fill="#1f70c0"/><rect x="2.9" y="4.2" width="6.9" height="5.9" fill="#1f70c0"/><rect x="4.3" y="5" width="1" height="4.3" fill="#e6f0fa"/><rect x="6.6" y="5" width="1" height="4.3" fill="#cfe1f3"/><rect x="8.5" y="4.4" width="0.8" height="5" fill="#7fb0e0"/></svg></div>
<div class="t" style="left:113.00px;top:169.10px;width:53.0px;text-align:center;font-size:6.2px;line-height:11px;color:#383838;letter-spacing:0.12px;color:#2a1fd6;font-size:5.9px"><u>View Topics</u></div>
<div class="t" style="left:166.00px;top:169.10px;width:68.0px;text-align:center;font-size:6.2px;line-height:11px;color:#383838;letter-spacing:0.12px;color:#2a1fd6;font-size:5.9px;letter-spacing:0"><u>Upload Multiple Files</u></div>
<div class="t" style="left:234.00px;top:169.30px;width:64.0px;text-align:center;font-size:6.2px;line-height:11px;color:#383838;letter-spacing:0.12px;font-size:5.9px">BP603T-SM06</div>
<div class="t" style="left:300.50px;top:168.30px;font-size:6.2px;line-height:11px;color:#383838;letter-spacing:0.12px;">College Of Pharmacy / B.Pharma / 6 / N/A / N/A / N/A</div>
<div class="t" style="left:459.00px;top:169.90px;font-size:6.2px;line-height:11px;color:#383838;letter-spacing:0.12px;font-size:5.7px;letter-spacing:0">HERBAL DRUG TECHNOLOGY-THEORY</div>
<div class="t" style="left:618.00px;top:168.30px;font-size:6.2px;line-height:11px;color:#383838;letter-spacing:0.12px;">Study Material</div>
<div class="t" style="left:681.50px;top:168.30px;font-size:6.2px;line-height:11px;color:#383838;letter-spacing:0.12px;">Unit 5 : I</div>
<div class="t" style="left:-1.00px;top:200.60px;width:18.6px;text-align:center;font-size:5.5px;line-height:11px;color:#2e6e9e">8</div>
<div class="a" style="left:36.20px;top:198.00px;width:11px;height:11px;line-height:0"><svg width="11" height="11" viewBox="0 0 11 11"><defs><linearGradient id="dg7" x1="0" y1="0" x2="1" y2="1"><stop offset="0" stop-color="#72b92a"/><stop offset="1" stop-color="#56a516"/></linearGradient></defs><path d="M3.6 0.4H7.4L10.6 3.6V7.4L7.4 10.6H3.6L0.4 7.4V3.6Z" fill="url(#dg7)"/><circle cx="5.5" cy="5.5" r="5" fill="url(#dg7)"/><path d="M5.5 2.6V7.6" stroke="#fff" stroke-width="1.3"/><path d="M3.9 6.5L5.5 8.6L7.1 6.5Z" fill="#fff"/></svg></div>
<div class="a" style="left:84.00px;top:198.50px;width:12px;height:12px;line-height:0"><svg width="12" height="12" viewBox="0 0 12 12"><ellipse cx="6.3" cy="10.6" rx="4.8" ry="0.8" fill="#8c959e" opacity="0.6"/><path d="M0.4 4.6L10.6 2.4" stroke="#1f70c0" stroke-width="1.4"/><rect x="3.4" y="1.1" width="4.6" height="2.4" fill="#1f70c0"/><rect x="4.4" y="1.9" width="2.6" height="0.8" fill="#dbe9f6"/><rect x="5" y="0.2" width="1.8" height="1.1" fill="#1f70c0"/><rect x="2.9" y="4.2" width="6.9" height="5.9" fill="#1f70c0"/><rect x="4.3" y="5" width="1" height="4.3" fill="#e6f0fa"/><rect x="6.6" y="5" width="1" height="4.3" fill="#cfe1f3"/><rect x="8.5" y="4.4" width="0.8" height="5" fill="#7fb0e0"/></svg></div>
<div class="t" style="left:113.00px;top:200.70px;width:53.0px;text-align:center;font-size:6.2px;line-height:11px;color:#383838;letter-spacing:0.12px;color:#2a1fd6;font-size:5.9px"><u>View Topics</u></div>
<div class="t" style="left:166.00px;top:200.70px;width:68.0px;text-align:center;font-size:6.2px;line-height:11px;color:#383838;letter-spacing:0.12px;color:#2a1fd6;font-size:5.9px;letter-spacing:0"><u>Upload Multiple Files</u></div>
<div class="t" style="left:234.00px;top:200.90px;width:64.0px;text-align:center;font-size:6.2px;line-height:11px;color:#383838;letter-spacing:0.12px;font-size:5.9px">DPH103-SM01</div>
<div class="t" style="left:300.50px;top:199.90px;font-size:6.2px;line-height:11px;color:#383838;letter-spacing:0.12px;">College Of Pharmacy / D.Pharma / 1 / N/A / N/A / N/A</div>
<div class="t" style="left:459.00px;top:199.90px;font-size:6.2px;line-height:11px;color:#383838;letter-spacing:0.12px;">Pharmacognosy</div>
<div class="t" style="left:618.00px;top:199.90px;font-size:6.2px;line-height:11px;color:#383838;letter-spacing:0.12px;">Study Material</div>
<div class="t" style="left:681.50px;top:183.40px;font-size:6.2px;line-height:11px;color:#383838;letter-spacing:0.12px;">Brief outl<br>isolation,<br>pharmac<br>SM01</div>
<div class="t" style="left:-1.00px;top:237.10px;width:18.6px;text-align:center;font-size:5.5px;line-height:11px;color:#2e6e9e">9</div>
<div class="a" style="left:36.20px;top:235.00px;width:11px;height:11px;line-height:0"><svg width="11" height="11" viewBox="0 0 11 11"><defs><linearGradient id="dg8" x1="0" y1="0" x2="1" y2="1"><stop offset="0" stop-color="#72b92a"/><stop offset="1" stop-color="#56a516"/></linearGradient></defs><path d="M3.6 0.4H7.4L10.6 3.6V7.4L7.4 10.6H3.6L0.4 7.4V3.6Z" fill="url(#dg8)"/><circle cx="5.5" cy="5.5" r="5" fill="url(#dg8)"/><path d="M5.5 2.6V7.6" stroke="#fff" stroke-width="1.3"/><path d="M3.9 6.5L5.5 8.6L7.1 6.5Z" fill="#fff"/></svg></div>
<div class="a" style="left:84.00px;top:235.00px;width:12px;height:12px;line-height:0"><svg width="12" height="12" viewBox="0 0 12 12"><ellipse cx="6.3" cy="10.6" rx="4.8" ry="0.8" fill="#8c959e" opacity="0.6"/><path d="M0.4 4.6L10.6 2.4" stroke="#1f70c0" stroke-width="1.4"/><rect x="3.4" y="1.1" width="4.6" height="2.4" fill="#1f70c0"/><rect x="4.4" y="1.9" width="2.6" height="0.8" fill="#dbe9f6"/><rect x="5" y="0.2" width="1.8" height="1.1" fill="#1f70c0"/><rect x="2.9" y="4.2" width="6.9" height="5.9" fill="#1f70c0"/><rect x="4.3" y="5" width="1" height="4.3" fill="#e6f0fa"/><rect x="6.6" y="5" width="1" height="4.3" fill="#cfe1f3"/><rect x="8.5" y="4.4" width="0.8" height="5" fill="#7fb0e0"/></svg></div>
<div class="t" style="left:113.00px;top:237.20px;width:53.0px;text-align:center;font-size:6.2px;line-height:11px;color:#383838;letter-spacing:0.12px;color:#2a1fd6;font-size:5.9px"><u>View Topics</u></div>
<div class="t" style="left:166.00px;top:237.20px;width:68.0px;text-align:center;font-size:6.2px;line-height:11px;color:#383838;letter-spacing:0.12px;color:#2a1fd6;font-size:5.9px;letter-spacing:0"><u>Upload Multiple Files</u></div>
<div class="t" style="left:234.00px;top:237.40px;width:64.0px;text-align:center;font-size:6.2px;line-height:11px;color:#383838;letter-spacing:0.12px;font-size:5.9px">BP303-SM01</div>
<div class="t" style="left:300.50px;top:230.90px;font-size:6.2px;line-height:11px;color:#383838;letter-spacing:0.12px;">College Of Pharmacy / B.Pharma / 3 / N/A / SECTION<br>A / N/A</div>
<div class="t" style="left:459.00px;top:238.00px;font-size:6.2px;line-height:11px;color:#383838;letter-spacing:0.12px;font-size:5.7px;letter-spacing:0">PHARMACEUTICAL MICROBIOLOGY - THEORY</div>
<div class="t" style="left:618.00px;top:236.40px;font-size:6.2px;line-height:11px;color:#383838;letter-spacing:0.12px;">Study Material</div>
<div class="t" style="left:681.50px;top:236.40px;font-size:6.2px;line-height:11px;color:#383838;letter-spacing:0.12px;">Pharmac</div>
<div class="a" style="left:706.50px;top:55.50px;width:11.5px;height:199px;background:#fafafa"></div>
<svg class="a" style="left:708.50px;top:60.00px" width="8" height="5" viewBox="0 0 8 5"><path d="M0.5 4.5L4 0.8L7.5 4.5Z" fill="#505050"/></svg>
<div class="a" style="left:709.00px;top:70.30px;width:6.5px;height:56px;border-radius:4px;background:#8f8f8f"></div>
<svg class="a" style="left:708.50px;top:246.00px" width="8" height="5" viewBox="0 0 8 5"><path d="M0.5 0.5L4 4.2L7.5 0.5Z" fill="#505050"/></svg>
<div class="a" style="left:0;top:255.00px;width:718px;height:14.5px;background:#fafafa;border-bottom:1px solid #d9e4ee"></div>
<svg class="a" style="left:2.50px;top:258.50px" width="5" height="8" viewBox="0 0 5 8"><path d="M4.5 0.5L0.8 4L4.5 7.5Z" fill="#505050"/></svg>
<div class="a" style="left:14.00px;top:259.80px;width:282.3px;height:7px;border-radius:4px;background:#8f8f8f"></div>
<svg class="a" style="left:697.00px;top:258.50px" width="5" height="8" viewBox="0 0 5 8"><path d="M0.5 0.5L4.2 4L0.5 7.5Z" fill="#505050"/></svg>
<div class="a" style="left:0;top:269.50px;width:718px;height:15px;background:linear-gradient(#edf5fd,#e6f1fc 45%,#dbebfa 55%,#ecf5fd)"></div>
<svg class="a" style="left:315.20px;top:274.50px" width="6" height="5" viewBox="0 0 6 5"><rect x="0.5" y="0.3" width="0.8" height="4.4" fill="#c3d5e6"/><path d="M5.5 0.3L1.8 2.5L5.5 4.7Z" fill="#c3d5e6"/></svg>
<svg class="a" style="left:326.40px;top:274.50px" width="7" height="5" viewBox="0 0 7 5"><path d="M3.3 0.3L0.3 2.5L3.3 4.7Z M6.5 0.3L3.5 2.5L6.5 4.7Z" fill="#c3d5e6"/></svg>
<svg class="a" style="left:383.80px;top:274.50px" width="7" height="5" viewBox="0 0 7 5"><path d="M0.5 0.3L3.5 2.5L0.5 4.7Z M3.7 0.3L6.7 2.5L3.7 4.7Z" fill="#8fb1d0"/></svg>
<svg class="a" style="left:396.00px;top:274.50px" width="6" height="5" viewBox="0 0 6 5"><path d="M0.5 0.3L4.2 2.5L0.5 4.7Z" fill="#8fb1d0"/><rect x="4.7" y="0.3" width="0.8" height="4.4" fill="#8fb1d0"/></svg>
<div class="a" style="left:337.50px;top:271.50px;width:1px;height:11px;background:#cfdbe6"></div>
<div class="t" style="left:340.70px;top:272.60px;font-size:6px;line-height:8px;color:#3f6a96;font-weight:bold">Page</div>
<div class="a" style="left:355.70px;top:272.00px;width:8.7px;height:9.5px;background:#fff;border-radius:3px"></div>
<div class="t" style="left:357.00px;top:272.60px;font-size:6px;line-height:8px;color:#3f6a96;color:#333">1</div>
<div class="t" style="left:366.20px;top:272.60px;font-size:6px;line-height:8px;color:#3f6a96;font-weight:bold">of 3</div>
<div class="a" style="left:379.80px;top:271.50px;width:1px;height:11px;background:#cfdbe6"></div>
<div class="t" style="left:669.00px;top:272.60px;width:45.5px;text-align:right;font-size:6px;line-height:8px;color:#3f6a96;color:#6b93ba">View 1 - 30 of 87</div>
</div>
<div class="t" style="left:851px;top:489px;font-size:15.7px;line-height:20px;color:rgba(140,140,140,0.5)">Activate Windows</div>
<div class="t" style="left:851px;top:510px;font-size:12px;line-height:15px;color:rgba(140,140,140,0.5)">Go to Settings to activate Windows.</div>
</body></html>
